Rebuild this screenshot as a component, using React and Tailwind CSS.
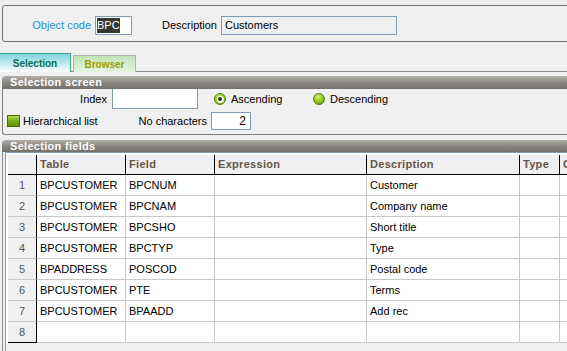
import React from 'react'

const COLS = [
  { key: 'table', label: 'Table', w: 'w-[89px]' },
  { key: 'field', label: 'Field', w: 'w-[89px]' },
  { key: 'expr', label: 'Expression', w: 'w-[152px]' },
  { key: 'desc', label: 'Description', w: 'w-[153px]' },
  { key: 'type', label: 'Type', w: 'w-[40px]' },
  { key: 'coef', label: 'Coeff', w: 'w-[60px]' },
]

const ROWS = [
  { table: 'BPCUSTOMER', field: 'BPCNUM', desc: 'Customer' },
  { table: 'BPCUSTOMER', field: 'BPCNAM', desc: 'Company name' },
  { table: 'BPCUSTOMER', field: 'BPCSHO', desc: 'Short title' },
  { table: 'BPCUSTOMER', field: 'BPCTYP', desc: 'Type' },
  { table: 'BPADDRESS', field: 'POSCOD', desc: 'Postal code' },
  { table: 'BPCUSTOMER', field: 'PTE', desc: 'Terms' },
  { table: 'BPCUSTOMER', field: 'BPAADD', desc: 'Add rec' },
  {},
]

function SectionHeader({ children, h }) {
  return (
    <div
      className={`${h} flex items-center rounded-tl-[4px] bg-[linear-gradient(to_bottom,#b2aeaa,#8a8682_50%,#74706c)] pl-[8px] text-[11px] font-bold tracking-[0.3px] text-white leading-none`}
    >
      {children}
    </div>
  )
}

function Radio({ checked }) {
  return (
    <div className="flex h-[12px] w-[12px] items-center justify-center rounded-full border border-[#4f7f0a] bg-[radial-gradient(circle_at_40%_30%,#d8f070,#8cc020_55%,#5a8a08)]">
      {checked && (
        <div className="flex h-[7px] w-[7px] items-center justify-center rounded-full bg-white">
          <div className="h-[4px] w-[4px] rounded-full bg-[#1d3a12]" />
        </div>
      )}
    </div>
  )
}

export default function App() {
  return (
    <div className="h-[351px] w-[567px] overflow-hidden bg-[#f0f0f0] font-['Liberation_Sans',Arial,sans-serif] text-[11px] text-black">
      {/* Object header */}
      <div className="ml-[2px] mt-[5px] flex h-[37px] w-[620px] items-start rounded-[3px] border border-[#6f6f6f] pt-[10px]">
        <div className="flex h-[19px] w-[88px] items-center justify-end text-[#1d8fe0]">Object code</div>
        <div className="ml-[4px] h-[19px] w-[37px] border border-[#7f9db9] bg-white">
          <span className="ml-[1px] mt-[1px] inline-block bg-[#363636] leading-[15px] text-white">BPC</span>
        </div>
        <div className="flex h-[19px] w-[85px] items-center justify-end">Description</div>
        <div className="ml-[4px] flex h-[19px] w-[176px] items-center border border-[#7f9db9] pl-[3px]">Customers</div>
      </div>

      {/* Tabs */}
      <div className="mt-[11px] flex h-[19px] items-start border-b border-[#8c8c8c]">
        <div className="relative z-10 flex h-[19px] w-[71px] items-center justify-center border-r border-t border-[#3fa886] bg-[linear-gradient(to_bottom,#7fd3dc,#c8eef0_60%,#ffffff)] text-[10px] font-bold text-[#0a6e58]">
          Selection
        </div>
        <div className="ml-[2px] mt-[2px] flex h-[17px] w-[63px] items-center justify-center border-l border-r border-t border-[#b4b4b4] bg-[linear-gradient(to_bottom,#c0e4b6,#e6f3e0)] text-[10px] font-bold text-[#98a000]">
          Browser
        </div>
      </div>

      {/* Selection screen */}
      <div className="ml-[2px] mt-[4px] w-[620px]">
        <SectionHeader h="h-[13px]">Selection screen</SectionHeader>
        <div className="h-[46px] rounded-bl-[3px] border-b border-l border-[#7c7c7c]">
          <div className="flex h-[20px] items-center">
            <div className="w-[104px] text-right">Index</div>
            <div className="ml-[5px] h-[20px] w-[86px] border border-t-0 border-[#7f9db9] bg-white" />
            <div className="ml-[16px]">
              <Radio checked />
            </div>
            <div className="ml-[5px] w-[82px]">Ascending</div>
            <Radio />
            <div className="ml-[5px]">Descending</div>
          </div>
          <div className="mt-[3px] flex h-[18px] items-center">
            <div className="flex w-[131px] items-center pl-[4px]">
              <div className="h-[12px] w-[13px] border border-[#466e00] bg-[linear-gradient(to_bottom,#b8dc50,#7eb018_45%,#5c8c08)]" />
              <div className="ml-[3px]">Hierarchical list</div>
            </div>
            <div className="w-[73px] text-right">No characters</div>
            <div className="ml-[4px] flex h-[18px] w-[40px] items-center justify-end border border-[#7f9db9] bg-white pr-[4px] text-[12px]">
              2
            </div>
          </div>
        </div>
      </div>

      {/* Selection fields */}
      <div className="ml-[2px] mt-[5px] w-[620px]">
        <SectionHeader h="h-[12px]">Selection fields</SectionHeader>
        <div className="h-[200px] border-l border-[#8a8a8a]">
          <div className="ml-[2px] h-full border-l border-t border-[#7f9db9] bg-[#f0f0f0]">
            <div className="bg-white pl-[2px] pt-[2px]">
              {/* header row */}
              <div className="flex h-[20px] border-b border-black bg-[#f0f0f0]">
                <div className="w-[29px] border-r border-black" />
                {COLS.map((c) => (
                  <div
                    key={c.key}
                    className={`${c.w} flex shrink-0 items-center overflow-hidden whitespace-nowrap border-r border-black pl-[3px] font-bold tracking-[0.3px] text-[#665646]`}
                  >
                    {c.label}
                  </div>
                ))}
              </div>
              {ROWS.map((r, i) => (
                <div key={i} className="flex h-[21px]">
                  <div
                    className={`flex w-[29px] shrink-0 items-center justify-center border-r border-black bg-[#f0f0f0] text-[#555] ${
                      i === ROWS.length - 1 ? 'border-b border-b-black' : 'border-b border-b-[#c8c8c8]'
                    }`}
                  >
                    {i + 1}
                  </div>
                  {COLS.map((c) => (
                    <div
                      key={c.key}
                      className={`${c.w} flex shrink-0 items-center overflow-hidden whitespace-nowrap border-b border-r border-[#c8c8c8] bg-white pl-[3px]`}
                    >
                      {r[c.key] || ''}
                    </div>
                  ))}
                </div>
              ))}
            </div>
          </div>
        </div>
      </div>
    </div>
  )
}
